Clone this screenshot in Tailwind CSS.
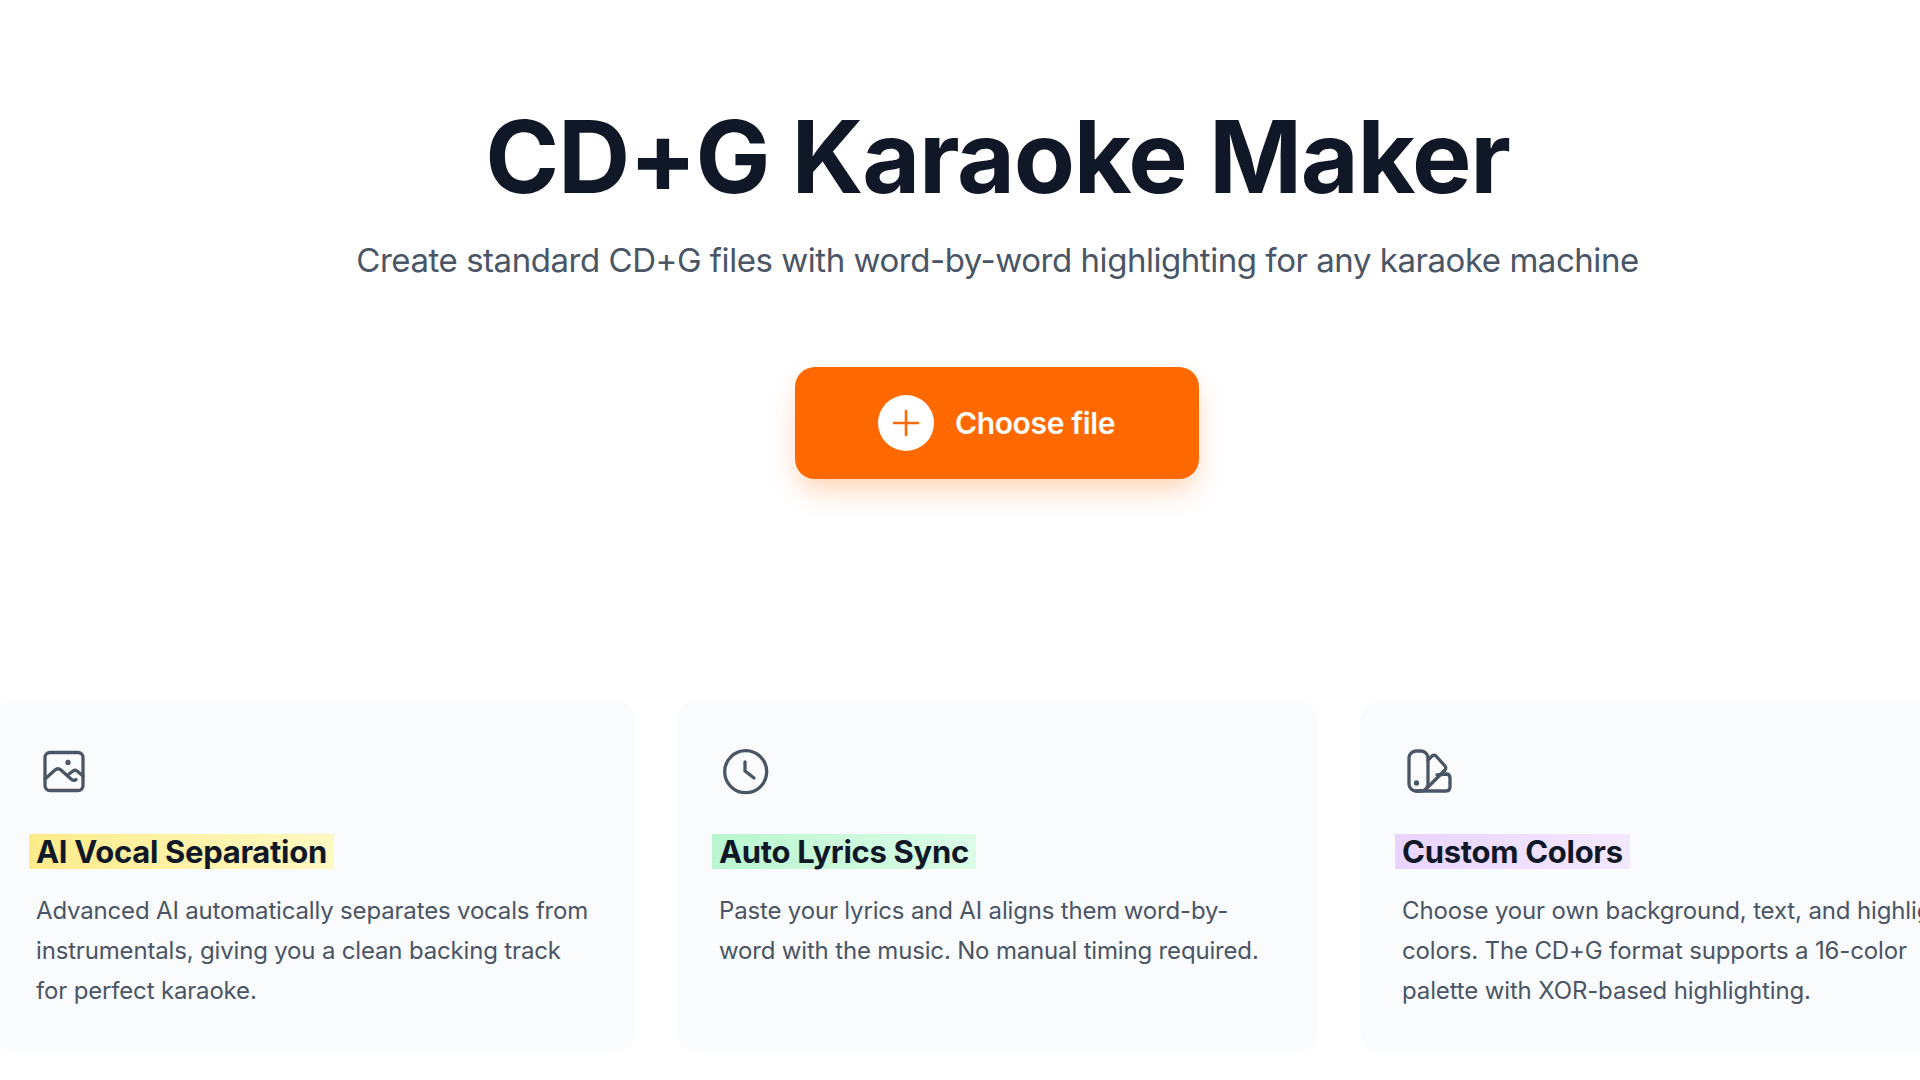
<!DOCTYPE html>
<html lang="en">
<head>
    <meta charset="UTF-8">
    <meta name="viewport" content="width=device-width, initial-scale=1.0">
    <title>CD+G Karaoke Maker</title>
    <script src="https://cdn.jsdelivr.net/npm/@tailwindcss/browser@4"></script>
</head>
<body class="bg-white overflow-hidden h-[1080px] font-['Inter',sans-serif]">
    <main class="w-[2007px] ml-[-6px]">
        <!-- Hero -->
        <section class="flex flex-col items-center pt-[102px]">
            <h1 class="text-[100px] leading-[110px] font-bold tracking-[-1.3px] text-[#101828]">CD+G Karaoke Maker</h1>
            <p class="mt-[24px] text-[33px] leading-[48px] tracking-[-0.46px] text-[#4a5565]">Create standard CD+G files with word-by-word highlighting for any karaoke machine</p>
            <button class="mt-[83px] mr-[2px] w-[404px] h-[112px] flex items-center justify-center gap-[21px] rounded-[20px] bg-[#ff6900] text-white text-[30px] font-semibold tracking-[-0.35px] shadow-[0_14px_28px_-4px_rgba(255,105,0,0.3)]">
                <span class="w-[56px] h-[56px] rounded-full bg-white flex items-center justify-center">
                    <svg width="28" height="28" viewBox="0 0 28 28" fill="none" stroke="#ff6900" stroke-width="2.6" stroke-linecap="round"><path d="M14 2v24M2 14h24"/></svg>
                </span>
                Choose file
            </button>
        </section>

        <!-- Features -->
        <section class="grid grid-cols-3 gap-[42px] mt-[222px]">
            <div class="h-[351px] rounded-[20px] bg-[#fafbfc] pt-[46px] px-[42px]">
                <svg class="w-[48px] h-[48px] ml-[6px] mb-[39px]" viewBox="12 12 48 48" fill="none" stroke="#4a5565" stroke-width="3.300" stroke-linecap="round" stroke-linejoin="round">
                    <rect x="15" y="17.500" width="38" height="38" rx="5"/>
                    <path d="M15 44l10-9q3-2.500 6 0l10 9q3 2.500 5 .5"/>
                    <path d="M39 39l4-3q2-1.500 4 0l6 5"/>
                    <circle cx="38" cy="27.500" r="1" fill="#4a5565"/>
                </svg>
                <h3 class="inline-block ml-[-7px] px-[7px] h-[35px] leading-[35px] text-[31px] font-bold tracking-[-0.3px] text-[#101828] bg-linear-to-r from-[#fdeb8a] to-[#fef9c2]">AI Vocal Separation</h3>
                <p class="mt-[22px] text-[24px] leading-[40px] tracking-[-0.17px] text-[#4a5565]">Advanced AI automatically separates vocals from instrumentals, giving you a clean backing track for perfect karaoke.</p>
            </div>
            <div class="h-[351px] rounded-[20px] bg-[#fafbfc] pt-[46px] px-[42px]">
                <svg class="w-[48px] h-[48px] ml-[4px] mb-[39px]" viewBox="12 12 48 48" fill="none" stroke="#4a5565" stroke-width="3.300" stroke-linecap="round" stroke-linejoin="round">
                    <circle cx="34.700" cy="36.700" r="21"/>
                    <path d="M34 27v9l9 7"/>
                </svg>
                <h3 class="inline-block ml-[-7px] px-[7px] h-[35px] leading-[35px] text-[31px] font-bold tracking-[-0.3px] text-[#101828] bg-linear-to-r from-[#b9f6d0] to-[#dcfce7]">Auto Lyrics Sync</h3>
                <p class="mt-[22px] text-[24px] leading-[40px] tracking-[-0.17px] text-[#4a5565]">Paste your lyrics and AI aligns them word-by-word with the music. No manual timing required.</p>
            </div>
            <div class="h-[351px] rounded-[20px] bg-[#fafbfc] pt-[46px] px-[42px]">
                <svg class="w-[48px] h-[48px] ml-[4px] mb-[39px]" viewBox="12 12 48 48" fill="none" stroke="#4a5565" stroke-width="3.300" stroke-linecap="round" stroke-linejoin="round">
                    <rect x="15" y="16" width="19" height="40" rx="7"/>
                    <path d="M34 25l4-4q2-1.500 4 0l9 10q1.500 2 0 4L32 54"/>
                    <path d="M43 40l9-1q4 0 4 4v9q0 4-4 4H22"/>
                    <circle cx="22.500" cy="48" r="1" fill="#4a5565"/>
                </svg>
                <h3 class="inline-block ml-[-7px] px-[7px] h-[35px] leading-[35px] text-[31px] font-bold tracking-[-0.3px] text-[#101828] bg-linear-to-r from-[#e9d4ff] to-[#f3e8ff]">Custom Colors</h3>
                <p class="mt-[22px] text-[24px] leading-[40px] tracking-[-0.14px] text-[#4a5565]">Choose your own background, text, and highlight colors. The CD+G format supports a 16-color palette with XOR-based highlighting.</p>
            </div>
        </section>
    </main>
</body>
</html>
